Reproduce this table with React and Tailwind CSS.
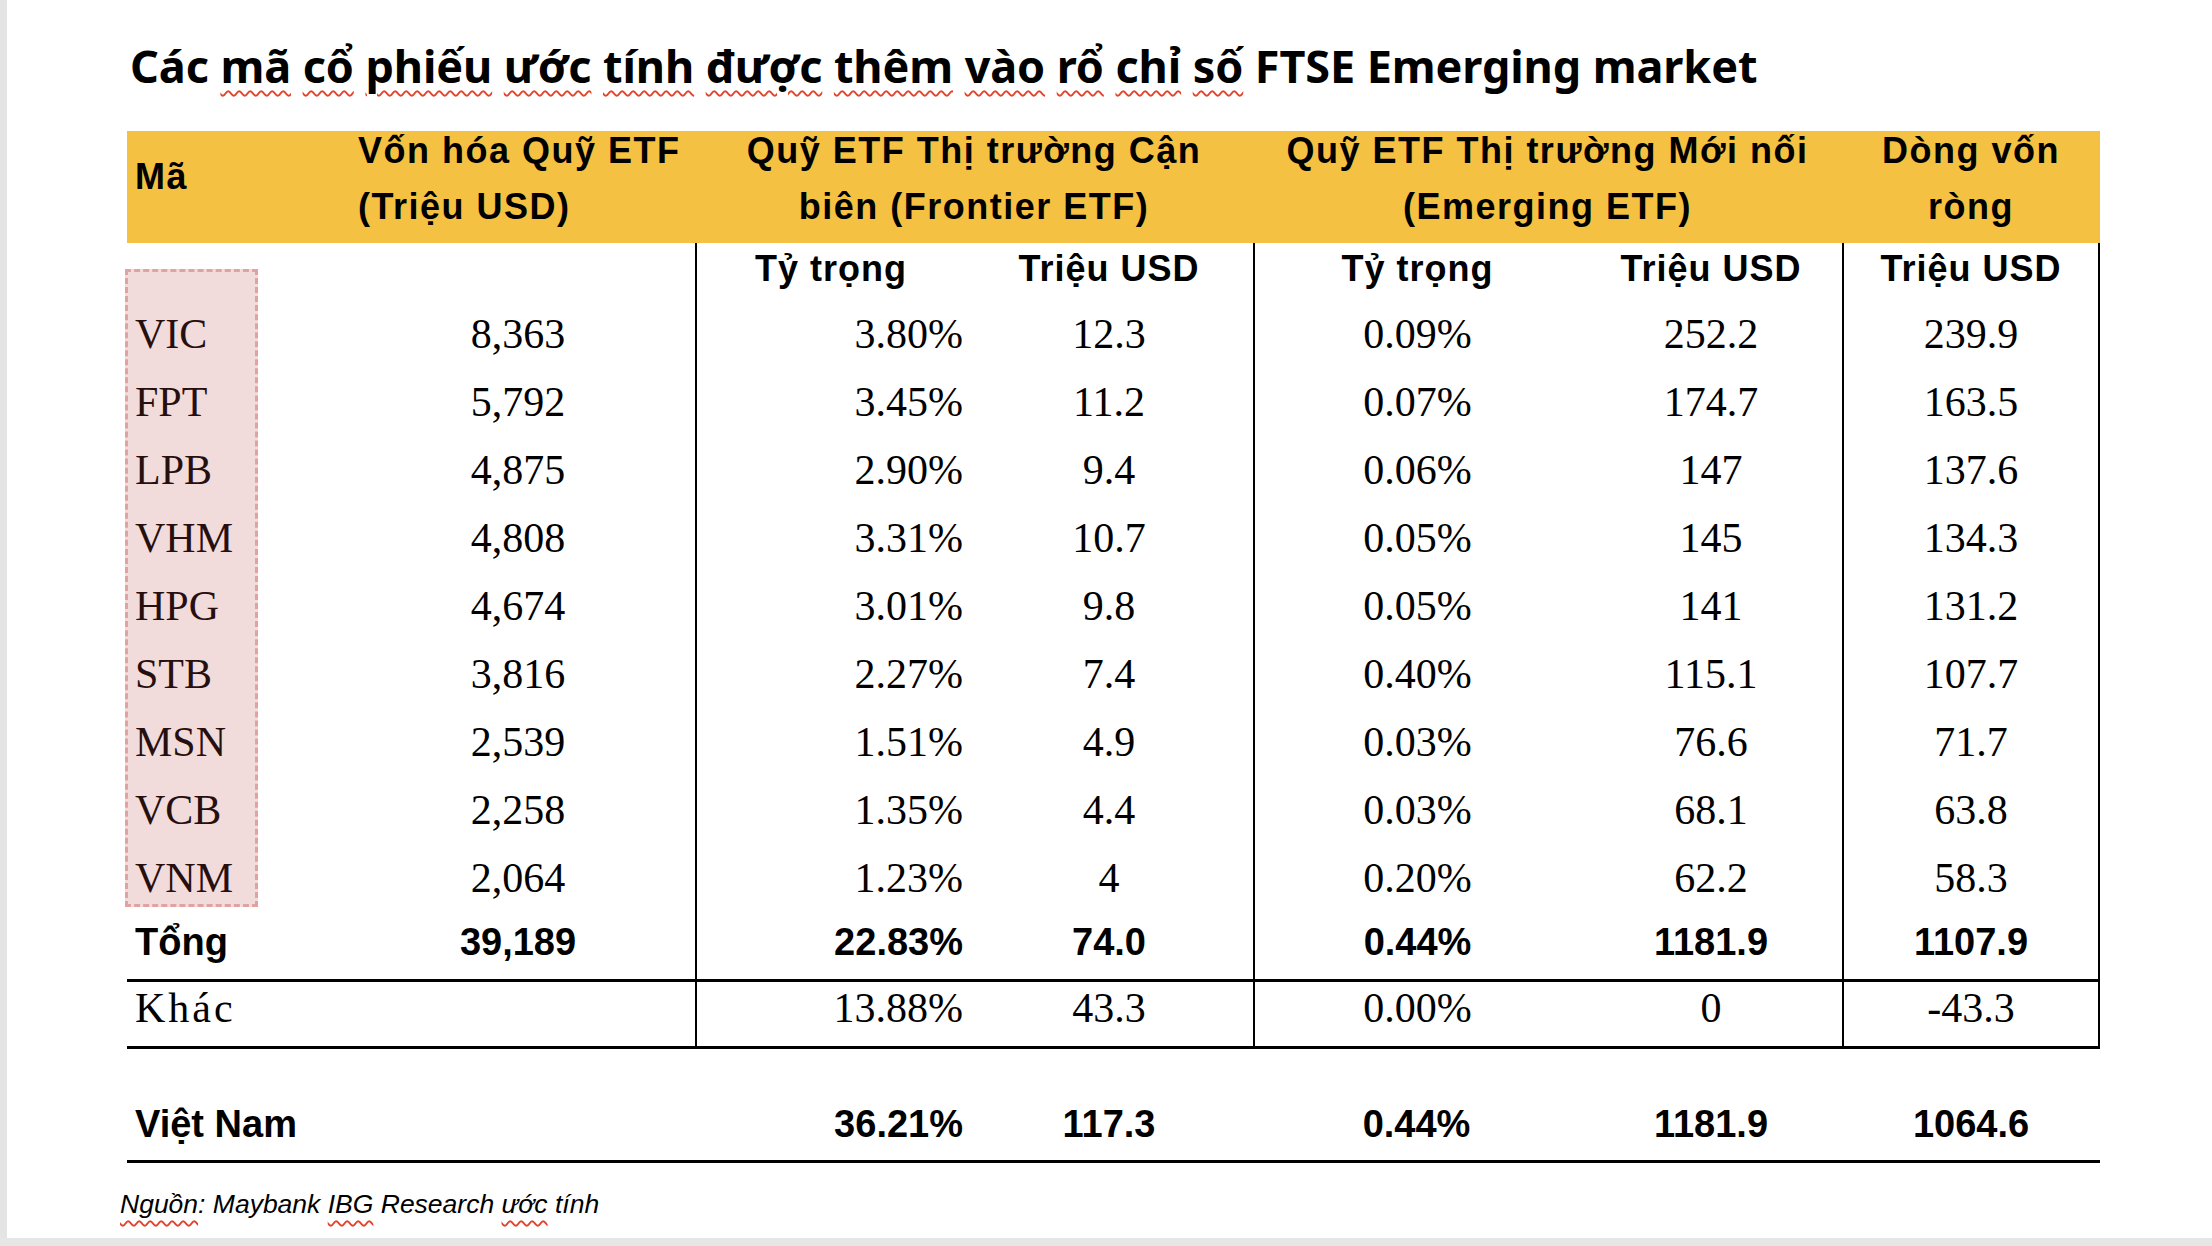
import React from 'react'

const rows = [
  ['VIC', '8,363', '3.80%', '12.3', '0.09%', '252.2', '239.9'],
  ['FPT', '5,792', '3.45%', '11.2', '0.07%', '174.7', '163.5'],
  ['LPB', '4,875', '2.90%', '9.4', '0.06%', '147', '137.6'],
  ['VHM', '4,808', '3.31%', '10.7', '0.05%', '145', '134.3'],
  ['HPG', '4,674', '3.01%', '9.8', '0.05%', '141', '131.2'],
  ['STB', '3,816', '2.27%', '7.4', '0.40%', '115.1', '107.7'],
  ['MSN', '2,539', '1.51%', '4.9', '0.03%', '76.6', '71.7'],
  ['VCB', '2,258', '1.35%', '4.4', '0.03%', '68.1', '63.8'],
  ['VNM', '2,064', '1.23%', '4', '0.20%', '62.2', '58.3'],
]

// one class per column: alignment + the vertical rules
const colCls = [
  'pl-[8px] text-left',
  'text-center',
  'text-right pr-[2px] border-l-2 border-black',
  'text-center',
  'text-center border-l-2 border-black',
  'text-center',
  'text-center border-l-2 border-r-2 border-black',
]

const gridCols = 'grid grid-cols-[214px_354px_270px_288px_327px_262px_258px]'

function Squiggle({ children }) {
  return (
    <span className="underline decoration-wavy decoration-[#e0442c] decoration-[1.5px] underline-offset-[7px]">
      {children}
    </span>
  )
}

export default function App() {
  const titleWords = ['mã', 'cổ', 'phiếu', 'ước', 'tính', 'được', 'thêm', 'vào', 'rổ', 'chỉ', 'số']

  return (
    <div className="w-[2212px] h-[1246px] flex flex-col bg-white text-black overflow-hidden">
      <div className="flex flex-1">
        <div className="w-[7px] bg-[#e4e4e4]" />
        <div className="relative flex-1 pl-[120px] pt-[43px]">
          {/* Title */}
          <h1 className="ml-[3px] font-['Noto_Sans',sans-serif] font-bold text-[45px] leading-none tracking-[-0.1px] whitespace-nowrap">
            Các{' '}
            {titleWords.map((w, i) => (
              <React.Fragment key={i}>
                <Squiggle>{w}</Squiggle>{' '}
              </React.Fragment>
            ))}
            FTSE Emerging market
          </h1>

          <div className="mt-[43px] w-[1973px]">
            {/* Yellow header */}
            <div className={`${gridCols} h-[112px] bg-[#f4c142] font-['Liberation_Sans',sans-serif] font-bold text-[36px] tracking-[1.5px]`}>
              <div className="flex items-center pl-[8px] pb-[20px]">Mã</div>
              <div className="flex flex-col pl-[17px] gap-[16px] leading-[40px]">
                <div>Vốn hóa Quỹ ETF</div>
                <div>(Triệu USD)</div>
              </div>
              <div className="col-span-2 flex flex-col items-center gap-[16px] leading-[40px]">
                <div>Quỹ ETF Thị trường Cận</div>
                <div>biên (Frontier ETF)</div>
              </div>
              <div className="col-span-2 flex flex-col items-center gap-[16px] leading-[40px]">
                <div>Quỹ ETF Thị trường Mới nối</div>
                <div>(Emerging ETF)</div>
              </div>
              <div className="flex flex-col items-center gap-[16px] leading-[40px]">
                <div>Dòng vốn</div>
                <div>ròng</div>
              </div>
            </div>

            {/* Sub header */}
            <div className={`${gridCols} h-[57px] font-['Liberation_Sans',sans-serif] font-bold text-[36px] leading-[52px] tracking-[1px]`}>
              <div className={colCls[0]} />
              <div className={colCls[1]} />
              <div className={`${colCls[2]} !text-center !pr-0`}>Tỷ trọng</div>
              <div className={colCls[3]}>Triệu USD</div>
              <div className={colCls[4]}>Tỷ trọng</div>
              <div className={colCls[5]}>Triệu USD</div>
              <div className={colCls[6]}>Triệu USD</div>
            </div>

            {/* Stock rows */}
            {rows.map((r) => (
              <div key={r[0]} className={`${gridCols} h-[68px] font-['Liberation_Serif',serif] text-[42px] leading-[68px]`}>
                {r.map((v, j) => (
                  <div key={j} className={colCls[j]}>{v}</div>
                ))}
              </div>
            ))}

            {/* Tổng */}
            <div className={`${gridCols} h-[70px] border-b-[3px] border-black font-['Liberation_Sans',sans-serif] font-bold text-[38px] leading-[60px]`}>
              {['Tổng', '39,189', '22.83%', '74.0', '0.44%', '1181.9', '1107.9'].map((v, j) => (
                <div key={j} className={colCls[j]}>{v}</div>
              ))}
            </div>

            {/* Khác */}
            <div className={`${gridCols} h-[67px] border-b-[3px] border-black font-['Liberation_Serif',serif] text-[42px] leading-[52px]`}>
              {['Khác', '', '13.88%', '43.3', '0.00%', '0', '-43.3'].map((v, j) => (
                <div key={j} className={`${colCls[j]} ${j === 0 ? 'tracking-[3px]' : ''}`}>{v}</div>
              ))}
            </div>

            {/* Việt Nam */}
            <div className={`${gridCols} h-[114px] pt-[50px] border-b-[3px] border-black font-['Liberation_Sans',sans-serif] font-bold text-[38px] leading-[50px]`}>
              {['Việt Nam', '', '36.21%', '117.3', '0.44%', '1181.9', '1064.6'].map((v, j) => (
                <div key={j} className={colCls[j].replace(/border-\S+/g, '')}>{v}</div>
              ))}
            </div>
          </div>

          {/* Source */}
          <p className="mt-[28px] -ml-[7px] font-['Liberation_Sans',sans-serif] italic text-[26.5px] leading-[26px]">
            <Squiggle>Nguồn</Squiggle>: Maybank <Squiggle>IBG</Squiggle> Research <Squiggle>ước</Squiggle> tính
          </p>

          {/* selection box over the ticker column */}
          <div className="absolute left-[118px] top-[269px] w-[133px] h-[638px] bg-[rgba(192,80,77,0.2)] border-[3px] border-dashed border-[#e0a3a2]" />
        </div>
      </div>
      <div className="h-[8px] bg-[#e6e6e6]" />
    </div>
  )
}
